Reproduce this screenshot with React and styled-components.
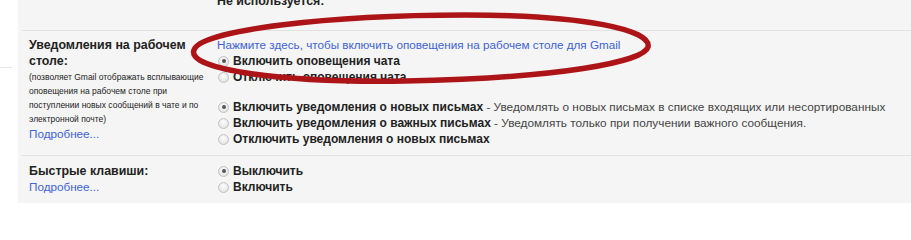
import React from 'react';
import styled, { createGlobalStyle } from 'styled-components';

const GlobalStyle = createGlobalStyle`
    html, body {
        margin: 0;
        padding: 0;
        background: #ffffff;
    }
    body {
        font-family: "Liberation Sans", Arial, sans-serif;
        color: #222222;
    }
`;

// 전체 화면
const Page = styled.div`
    position: relative;
    display: flex;
    flex-direction: row;
    width: 911px;
    height: 203px;
    overflow: hidden;
`;

// 왼쪽 흰 여백 (옆 패널의 흐린 선)
const Gutter = styled.div`
    width: 18px;
    flex-shrink: 0;
    display: flex;
    flex-direction: column;
`;

const GutterLine = styled.div`
    margin-top: 67px;
    width: 12px;
    height: 1px;
    background: #e6e6e6;
`;

// 회색 설정 패널
const Panel = styled.div`
    flex-grow: 1;
    background: #f5f5f5;
    display: flex;
    flex-direction: column;
`;

// 위쪽, 잘린 행
const CutRow = styled.div`
    height: 30px;
    display: flex;
    align-items: flex-end;
    padding-left: 199px;
    padding-bottom: 21px;
    box-sizing: border-box;
`;

const Row = styled.div`
    margin-left: 4px;
    border-top: 1px solid #e2e2e2;
    display: flex;
    flex-direction: row;
    padding: ${props => props.$pad || '6px 0 8px'};
`;

const LabelCol = styled.div`
    width: 195px;
    flex-shrink: 0;
    padding-left: 7px;
    box-sizing: border-box;
    display: flex;
    flex-direction: column;
`;

const Label = styled.div`
    font-size: 12.4px;
    line-height: 16px;
    font-weight: bold;
    color: #222222;
    white-space: nowrap;
`;

const Description = styled.div`
    margin-top: 1px;
    font-size: 8.5px;
    line-height: 14px;
    color: #222222;
    white-space: nowrap;
`;

const MoreLink = styled.a`
    font-size: 11.7px;
    line-height: 15px;
    color: #3d63d4;
    text-decoration: none;
    white-space: nowrap;
`;

const OptionsCol = styled.div`
    display: flex;
    flex-direction: column;
`;

const Group = styled.div`
    display: flex;
    flex-direction: column;
    & + & {
        margin-top: 14px;
    }
`;

const DesktopLink = styled.a`
    font-size: 11.7px;
    line-height: 16px;
    color: #3d63d4;
    text-decoration: none;
    white-space: nowrap;
`;

const Option = styled.label`
    display: flex;
    flex-direction: row;
    align-items: center;
    height: 16px;
    white-space: nowrap;
`;

// 라디오 버튼
const Radio = styled.span`
    position: relative;
    width: 11px;
    height: 11px;
    margin: 0 4px 0 1px;
    box-sizing: border-box;
    border-radius: 50%;
    border: 1px solid #c2c2c2;
    background: radial-gradient(circle at 50% 35%, #fdfdfd 0%, #e6e6e6 70%, #d6d6d6 100%);
    flex-shrink: 0;

    &::after {
        content: '';
        display: ${props => (props.$checked ? 'block' : 'none')};
        position: absolute;
        left: 2.5px;
        top: 2.5px;
        width: 4px;
        height: 4px;
        border-radius: 50%;
        background: #555555;
    }
`;

const OptionTitle = styled.span`
    font-size: 12px;
    font-weight: bold;
    color: #222222;
`;

const OptionNote = styled.span`
    font-size: 11.8px;
    color: #444444;
    white-space: pre;
`;

// 빨간 타원 표시
const Marker = styled.svg`
    position: absolute;
    left: 0;
    top: 0;
    pointer-events: none;
`;

const RadioOption = ({ checked, title, note }) => (
    <Option>
        <Radio $checked={checked} />
        <OptionTitle>{title}</OptionTitle>
        {note && <OptionNote>{' - ' + note}</OptionNote>}
    </Option>
);

const App = () => {
    return (
        <Page>
            <GlobalStyle />
            <Gutter>
                <GutterLine />
            </Gutter>
            <Panel>
                <CutRow>
                    <Label>Не используется:</Label>
                </CutRow>

                <Row>
                    <LabelCol>
                        <Label>Уведомления на рабочем<br />столе:</Label>
                        <Description>
                            (позволяет Gmail отображать всплывающие<br />
                            оповещения на рабочем столе при<br />
                            поступлении новых сообщений в чате и по<br />
                            электронной почте)
                        </Description>
                        <MoreLink href="#">Подробнее...</MoreLink>
                    </LabelCol>
                    <OptionsCol>
                        <Group>
                            <DesktopLink href="#">
                                Нажмите здесь, чтобы включить оповещения на рабочем столе для Gmail
                            </DesktopLink>
                            <RadioOption checked title="Включить оповещения чата" />
                            <RadioOption title="Отключить оповещения чата" />
                        </Group>
                        <Group>
                            <RadioOption
                                checked
                                title="Включить уведомления о новых письмах"
                                note="Уведомлять о новых письмах в списке входящих или несортированных"
                            />
                            <RadioOption
                                title="Включить уведомления о важных письмах"
                                note="Уведомлять только при получении важного сообщения."
                            />
                            <RadioOption title="Отключить уведомления о новых письмах" />
                        </Group>
                    </OptionsCol>
                </Row>

                <Row $pad="7px 0 8px">
                    <LabelCol>
                        <Label>Быстрые клавиши:</Label>
                        <MoreLink href="#">Подробнее...</MoreLink>
                    </LabelCol>
                    <OptionsCol>
                        <Group>
                            <RadioOption checked title="Выключить" />
                            <RadioOption title="Включить" />
                        </Group>
                    </OptionsCol>
                </Row>
            </Panel>

            <Marker width="911" height="100" viewBox="0 0 911 100">
                <path
                    d="M 194 50 C 200 30, 330 15, 465 15 C 585 15, 652 30, 648 47 C 644 62, 560 78, 405 81 C 285 83, 186 70, 194 50 Z"
                    fill="none"
                    stroke="#ad1417"
                    strokeWidth="5.5"
                    strokeLinejoin="round"
                />
            </Marker>
        </Page>
    );
};

export default App;
